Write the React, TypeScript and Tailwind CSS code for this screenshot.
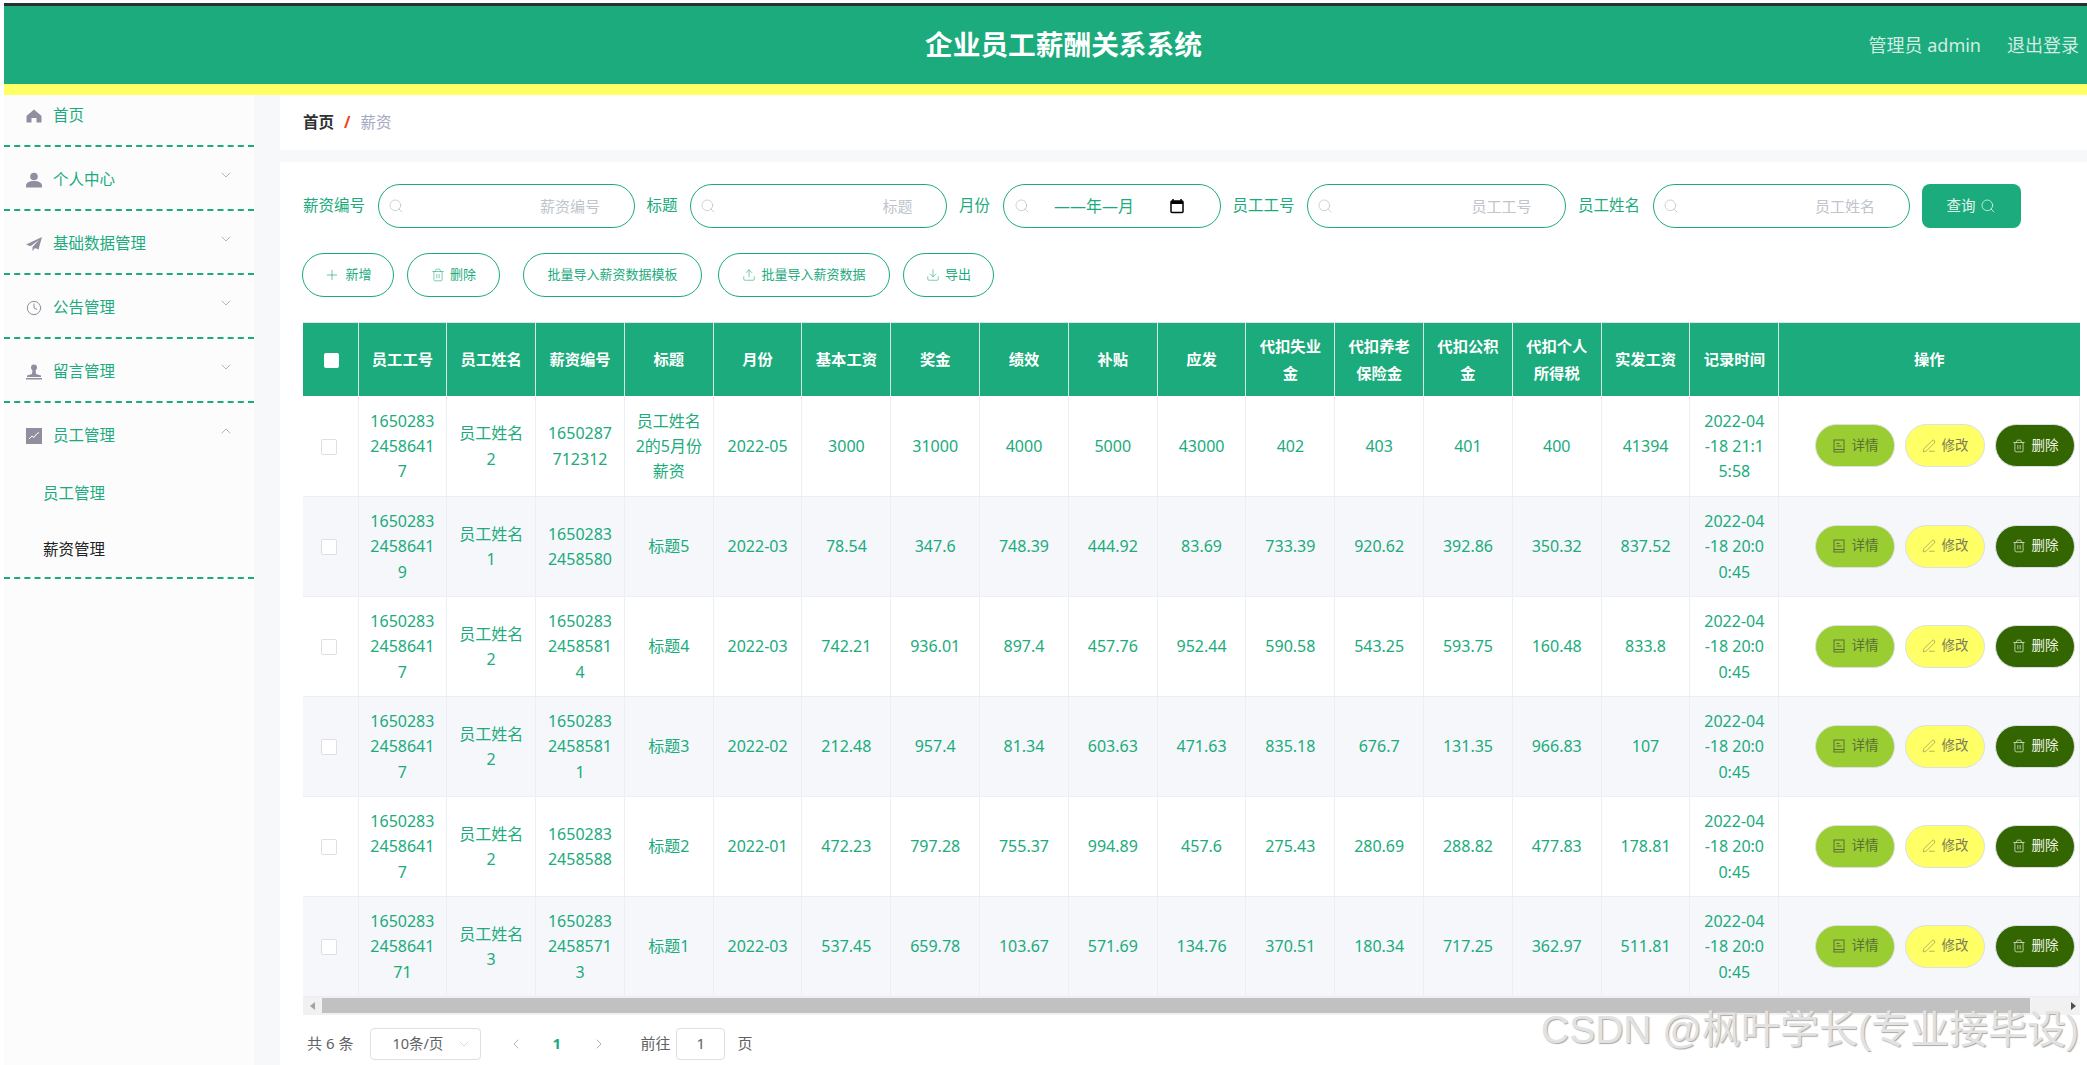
import React from 'react';
import { Search, Plus, Trash2, Upload, Download, ChevronDown, ChevronUp, ChevronLeft, ChevronRight, PenLine, Clock } from 'lucide-react';

const HomeIcon = () => (
  <svg viewBox="0 0 16 16" className="w-4 h-4 fill-[#8f8f9f]"><path d="M8 1.500 15.500 8v6.500h-5V10h-5v4.500h-5V8z" /></svg>
);
const UserIcon = () => (
  <svg viewBox="0 0 16 16" className="w-4 h-4 fill-[#8f8f9f]"><circle cx="8" cy="4.500" r="3.800" /><path d="M0 14c0-3.500 3-5 8-5s8 1.500 8 5v1.500H0z" /></svg>
);
const PlaneIcon = () => (
  <svg viewBox="0 0 16 16" className="w-4 h-4 fill-[#8f8f9f]"><path d="M16 1 0 8.500l4.500 1.800L13 4 6.500 11v4l2.500-3 3.500 1.500z" /></svg>
);
const StampIcon = () => (
  <svg viewBox="0 0 16 16" className="w-4 h-4 fill-[#8f8f9f]"><circle cx="8" cy="3.500" r="3" /><path d="M6.500 6h3l.5 4 5 1.500V13H1v-1.500L6 10z" /><path d="M0 14h16v1.500H0z" /></svg>
);
const ChartIcon = () => (
  <svg viewBox="0 0 16 16" className="w-4 h-4"><path d="M0 0h16v16H0z" className="fill-[#8f8f9f]" /><path d="M3 11l3-3 2 1.500 2.500-3.500L13 4.500" className="fill-none stroke-white" strokeWidth="1" /></svg>
);
const CalendarIcon = () => (
  <svg viewBox="0 0 16 16" className="w-4 h-4"><path d="M4 1v3M12 1v3" className="stroke-black" strokeWidth="1.500" /><rect x="2" y="3" width="12" height="11.500" rx="1" className="fill-none stroke-black" strokeWidth="1.500" /><path d="M2 3h12v3H2z" className="fill-black" /></svg>
);
const DocIcon = () => (
  <svg viewBox="0 0 14 14" className="w-[14px] h-[14px] fill-none stroke-current" strokeWidth="1"><rect x="2" y="1" width="10" height="12" /><path d="M4.500 4.500h3M4.500 7h5M2 10.500h10" /></svg>
);

const Side = ({ icon, label, open, first }: { icon: React.ReactNode; label: string; open?: boolean; first?: boolean }) => (
  <div className={`flex items-center pl-[22px] pr-[20px] text-[#1bab7c] ${first ? 'h-10 pt-[2px]' : 'h-[62px] pt-[3px]'}`}>
    <span className="w-[27px] shrink-0">{icon}</span>
    <span className="flex-1">{label}</span>
    {first ? null : open ? <ChevronUp className="w-4 h-4 mb-[9px] text-[#909399]" strokeWidth={1} /> : <ChevronDown className="w-4 h-4 mb-[9px] text-[#909399]" strokeWidth={1} />}
  </div>
);
const Dash = () => <div className="border-b-2 border-dashed border-[#1bab7c]" />;

const Field = ({ label, ph, w }: { label: string; ph: string; w: string }) => (
  <>
    <span className="text-[#1bab7c] whitespace-nowrap mr-[1.300px]">{label}</span>
    <div className={`relative h-11 shrink-0 ${w}`}>
      <Search className="absolute left-[10px] top-[14px] w-4 h-4 text-[#c0c4cc]" strokeWidth={1.200} />
      <input readOnly placeholder={ph} className="w-full h-full rounded-[22px] border border-[#1bab7c] bg-white pr-[34px] text-right text-[15px] outline-none placeholder:text-[#c0c4cc]" />
    </div>
  </>
);

const OutBtn = ({ children, w }: { children: React.ReactNode; w: string }) => (
  <button className={`h-11 rounded-[22px] border border-[#1bab7c] bg-white text-[#1bab7c] text-[13px] flex items-center justify-center gap-[5px] shrink-0 ${w}`}>{children}</button>
);

const cols = ['员工工号', '员工姓名', '薪资编号', '标题', '月份', '基本工资', '奖金', '绩效', '补贴', '应发', '代扣失业金', '代扣养老保险金', '代扣公积金', '代扣个人所得税', '实发工资', '记录时间'];

const rows: string[][] = [
  ['165028324586417', '员工姓名2', '1650287712312', '员工姓名2的5月份薪资', '2022-05', '3000', '31000', '4000', '5000', '43000', '402', '403', '401', '400', '41394', '2022-04-18 21:15:58'],
  ['165028324586419', '员工姓名1', '16502832458580', '标题5', '2022-03', '78.54', '347.6', '748.39', '444.92', '83.69', '733.39', '920.62', '392.86', '350.32', '837.52', '2022-04-18 20:00:45'],
  ['165028324586417', '员工姓名2', '165028324585814', '标题4', '2022-03', '742.21', '936.01', '897.4', '457.76', '952.44', '590.58', '543.25', '593.75', '160.48', '833.8', '2022-04-18 20:00:45'],
  ['165028324586417', '员工姓名2', '165028324585811', '标题3', '2022-02', '212.48', '957.4', '81.34', '603.63', '471.63', '835.18', '676.7', '131.35', '966.83', '107', '2022-04-18 20:00:45'],
  ['165028324586417', '员工姓名2', '16502832458588', '标题2', '2022-01', '472.23', '797.28', '755.37', '994.89', '457.6', '275.43', '280.69', '288.82', '477.83', '178.81', '2022-04-18 20:00:45'],
  ['1650283245864171', '员工姓名3', '165028324585713', '标题1', '2022-03', '537.45', '659.78', '103.67', '571.69', '134.76', '370.51', '180.34', '717.25', '362.97', '511.81', '2022-04-18 20:00:45'],
];

const OpBtn = ({ bg, fg, icon, label }: { bg: string; fg: string; icon: React.ReactNode; label: string }) => (
  <button className={`w-20 h-[43px] rounded-[22px] border border-[#dcdfe6] text-[13.500px] flex items-center justify-center gap-[6px] ${bg} ${fg}`}>{icon}{label}</button>
);

export default function App() {
  return (
    <div className="h-screen w-full overflow-hidden bg-white pt-[3px] pl-[4px] text-[15.500px] flex flex-col relative" style={{ fontFamily: '"Noto Sans","Noto Sans CJK SC",sans-serif' }}>
      <header className="h-[92px] shrink-0 border-t-[3px] border-t-[#2d2d36] border-b-[11px] border-b-[#ffff66] bg-[#1bab7c] flex items-center pl-[921px] pr-2 text-[#d5ece3]">
        <h1 className="flex-1 text-[27.700px] font-bold text-white leading-none">企业员工薪酬关系系统</h1>
        <span className="text-[18px] mr-[26px]">管理员 admin</span>
        <span className="text-[18px]">退出登录</span>
      </header>
      <div className="flex flex-1 min-h-0">
        <aside className="w-[250px] shrink-0 bg-[#fcfcfd]">
          <Side first icon={<HomeIcon />} label="首页" />
          <div className="h-2.5" />
          <Dash />
          <Side icon={<UserIcon />} label="个人中心" />
          <Dash />
          <Side icon={<PlaneIcon />} label="基础数据管理" />
          <Dash />
          <Side icon={<Clock className="w-4 h-4 text-[#8f8f9f]" strokeWidth={1.500} />} label="公告管理" />
          <Dash />
          <Side icon={<StampIcon />} label="留言管理" />
          <Dash />
          <Side open icon={<ChartIcon />} label="员工管理" />
          <div className="h-14 flex items-center pl-[39px] pt-[2px] text-[#1bab7c]">员工管理</div>
          <div className="h-14 flex items-center pl-[39px] pt-[2px] text-[#222]">薪资管理</div>
          <Dash />
        </aside>
        <main className="flex-1 min-w-0 bg-[#f6f8fa] pl-[26px] flex flex-col">
          <div className="h-[55px] shrink-0 bg-white flex items-center pl-[23px] text-[15.500px]">
            <span className="font-bold text-[#303133]">首页</span>
            <span className="mx-[10px] font-bold text-[#f0441c]">/</span>
            <span className="text-[#a4a9c4]">薪资</span>
          </div>
          <div className="flex-1 min-h-0 mt-3 bg-white pl-[23px] pr-[7px] pt-[22px]">
            <div className="flex items-center gap-[11.600px] whitespace-nowrap">
              <Field label="薪资编号" ph="薪资编号" w="w-[257px]" />
              <Field label="标题" ph="标题" w="w-[257px]" />
              <span className="text-[#1bab7c] mr-[1.300px]">月份</span>
              <div className="relative h-11 w-[218px] shrink-0 rounded-[22px] border border-[#1bab7c] flex items-center pl-[50px] text-[#1bab7c] text-[16px]">
                <Search className="absolute left-[10px] top-[13px] w-4 h-4 text-[#c0c4cc]" strokeWidth={1.200} />
                <span>——年—月</span>
                <span className="absolute right-[35px] top-[13px]"><CalendarIcon /></span>
              </div>
              <Field label="员工工号" ph="员工工号" w="w-[259px]" />
              <Field label="员工姓名" ph="员工姓名" w="w-[257px]" />
              <button className="h-11 w-[99px] shrink-0 rounded-[8px] bg-[#1bab7c] text-[#e4f5ef] text-[14.500px] flex items-center justify-center gap-1">查询<Search className="w-4 h-4" strokeWidth={1.200} /></button>
            </div>
            <div className="flex items-center mt-[25px] -ml-px">
              <OutBtn w="w-[92px] mr-[13px]"><Plus className="w-4 h-4" strokeWidth={1} />新增</OutBtn>
              <OutBtn w="w-[93px] mr-[23px]"><Trash2 className="w-[14px] h-[14px]" strokeWidth={1} />删除</OutBtn>
              <OutBtn w="w-[179px] mr-[16px]">批量导入薪资数据模板</OutBtn>
              <OutBtn w="w-[172px] mr-[13px]"><Upload className="w-[14px] h-[14px]" strokeWidth={1} />批量导入薪资数据</OutBtn>
              <OutBtn w="w-[91px]"><Download className="w-[14px] h-[14px]" strokeWidth={1} />导出</OutBtn>
            </div>
            <div className="mt-[25px] border-t border-[#dfe3ea]">
              <table className="w-full table-fixed border-collapse text-center text-[16px] text-[#1bab7c]">
                <colgroup>
                  <col className="w-[55px]" />
                  {cols.map((c) => <col key={c} className="w-[88.800px]" />)}
                  <col />
                </colgroup>
                <thead>
                  <tr className="h-[73px] bg-[#1bab7c] text-white text-[15.300px] leading-[27px]">
                    <th className="border-r border-[#d5e8e1] pl-[2px]"><span className="inline-block w-[15px] h-[15px] rounded-[2px] bg-white align-middle" /></th>
                    {cols.map((c) => <th key={c} className="border-r border-[#d5e8e1] px-[10px] font-bold">{c}</th>)}
                    <th className="font-bold">操作</th>
                  </tr>
                </thead>
                <tbody>
                  {rows.map((r, i) => (
                    <tr key={i} className={`h-[100px] leading-[25.300px] ${i % 2 ? 'bg-[#f5f7fb]' : 'bg-white'}`}>
                      <td className="border-r border-b border-[#ebeef5] pr-[2px]"><span className="inline-block w-4 h-4 rounded-[2px] border border-[#dcdfe6] bg-white align-middle" /></td>
                      {r.map((v, j) => <td key={j} className={`border-r border-b border-[#ebeef5] break-all pt-[2px] ${j === 15 ? 'px-[13px]' : 'px-[10px]'}`}>{v}</td>)}
                      <td className="border-r border-b border-[#ebeef5]">
                        <div className="flex justify-end gap-[10px] pr-[4px]">
                          <OpBtn bg="bg-[#9acd32]" fg="text-[#5c6f38]" icon={<DocIcon />} label="详情" />
                          <OpBtn bg="bg-[#ffff66]" fg="text-[#7d7d58]" icon={<PenLine className="w-[14px] h-[14px]" strokeWidth={1} />} label="修改" />
                          <OpBtn bg="bg-[#336600]" fg="text-[#eef3e6]" icon={<Trash2 className="w-[14px] h-[14px]" strokeWidth={1.200} />} label="删除" />
                        </div>
                      </td>
                    </tr>
                  ))}
                </tbody>
              </table>
              <div className="h-[18px] bg-[#f1f1f1] flex items-center">
                <span className="w-[19px] flex justify-center"><span className="border-y-[4px] border-r-[5px] border-y-transparent border-r-[#a3a3a3]" /></span>
                <span className="flex-1 h-[15px] bg-[#c1c1c1]" />
                <span className="w-[50px] flex justify-end pr-[4px]"><span className="border-y-[4px] border-l-[5px] border-y-transparent border-l-[#505050]" /></span>
              </div>
            </div>
            <div className="flex items-center mt-[13px] pl-1 text-[15px] text-[#606266]">
              <span>共 6 条</span>
              <div className="ml-[17px] w-[111px] h-8 rounded-[4px] border border-[#dcdfe6] flex items-center pl-[21px] pr-2 justify-between text-[14.500px]">
                <span>10条/页</span><ChevronDown className="w-4 h-4 text-[#c0c4cc]" strokeWidth={1} />
              </div>
              <ChevronLeft className="ml-[27px] w-4 h-4 text-[#b0b3b8]" strokeWidth={1.500} />
              <span className="ml-[28px] w-2 font-bold text-[#1bab7c]">1</span>
              <ChevronRight className="ml-[31px] w-4 h-4 text-[#b0b3b8]" strokeWidth={1.500} />
              <span className="ml-[33px]">前往</span>
              <div className="ml-[6px] w-[49px] h-8 rounded-[4px] border border-[#dcdfe6] flex items-center justify-center">1</div>
              <span className="ml-[12px]">页</span>
            </div>
          </div>
        </main>
      </div>
      <div className="absolute left-[1541px] top-[1006px] text-[39px] leading-[48px] whitespace-nowrap text-[#e2e2e2] [text-shadow:1px_1px_1px_#a8a8a8]" style={{ fontFamily: '"Liberation Sans","Noto Sans CJK SC",sans-serif' }}>CSDN @枫叶学长(专业接毕设)</div>
    </div>
  );
}
